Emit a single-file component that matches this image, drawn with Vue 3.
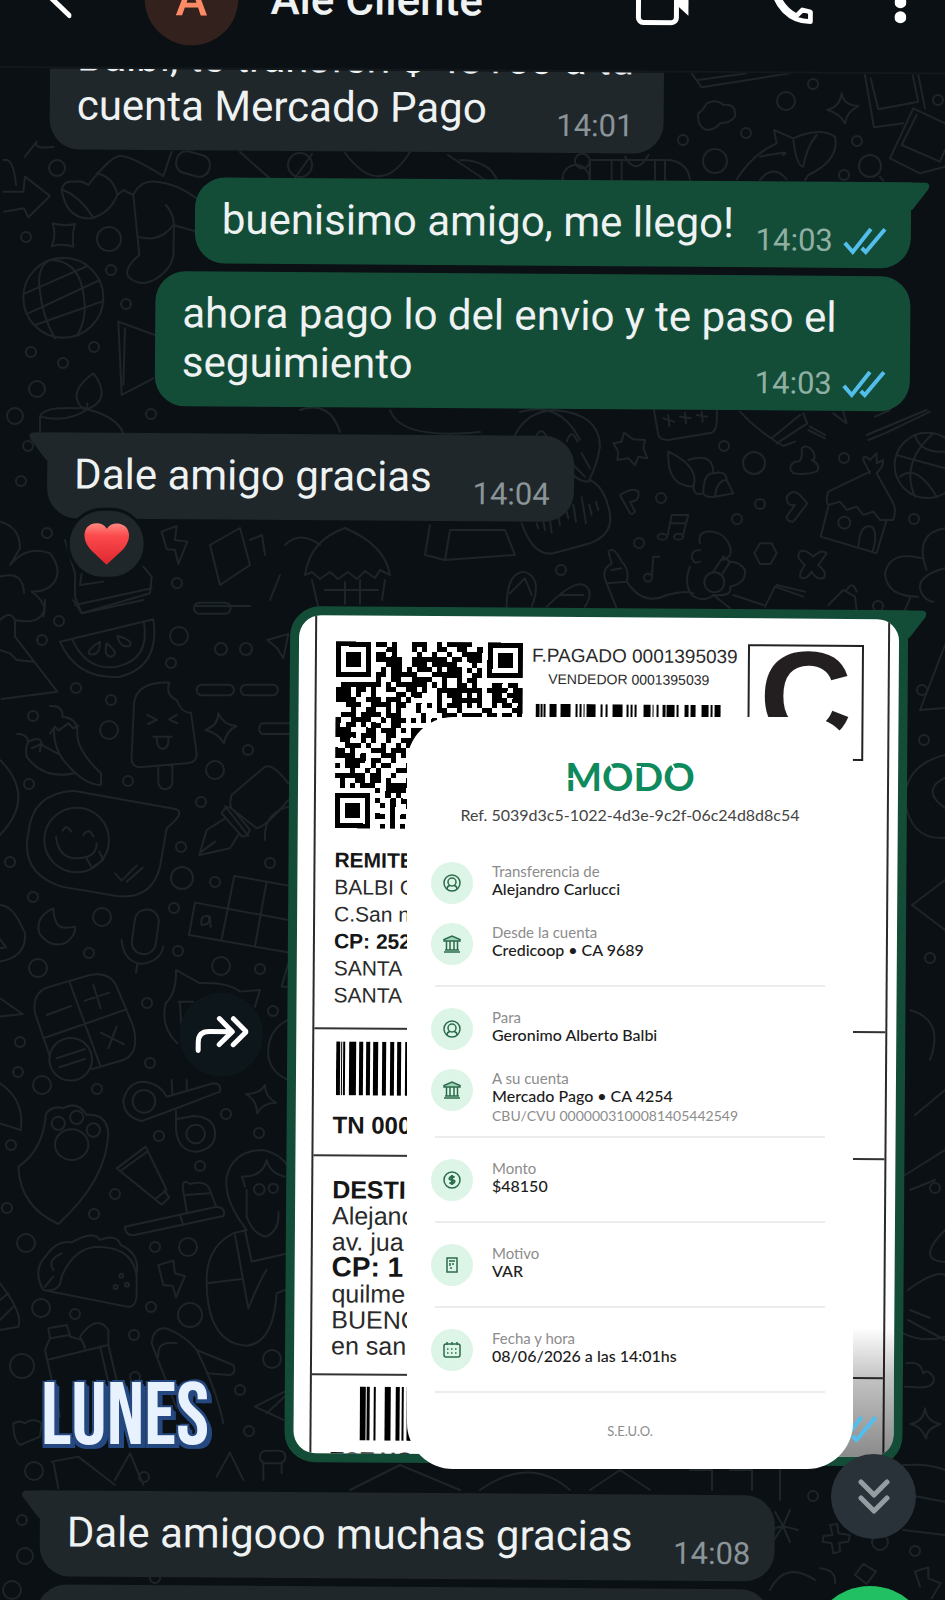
<script setup>
import { ref } from "vue";

const messages = ref([
  { id: 1, side: "in", text: "Balbi, te transferi $ 48150 a tu\ncuenta Mercado Pago", time: "14:01" },
  { id: 2, side: "out", text: "buenisimo amigo, me llego!", time: "14:03", first: true },
  { id: 3, side: "out", text: "ahora pago lo del envio y te paso el seguimiento", time: "14:03" },
  { id: 4, side: "in", text: "Dale amigo gracias", time: "14:04", first: true, reaction: true },
  { id: 5, side: "out", photo: true, first: true },
  { id: 6, side: "in", text: "Dale amigooo muchas gracias", time: "14:08", first: true },
]);

// receipt sections, each one closed by a divider
const sections = [
  [
    { icon: "user", label: "Transferencia de", value: "Alejandro Carlucci" },
    { icon: "bank", label: "Desde la cuenta", value: "Credicoop • CA 9689" },
  ],
  [
    { icon: "user", label: "Para", value: "Geronimo Alberto Balbi" },
    { icon: "bank", label: "A su cuenta", value: "Mercado Pago • CA 4254", extra: "CBU/CVU 0000003100081405442549" },
  ],
  [{ icon: "money", label: "Monto", value: "$48150" }],
  [{ icon: "note", label: "Motivo", value: "VAR" }],
  [{ icon: "date", label: "Fecha y hora", value: "08/06/2026 a las 14:01hs" }],
];

// [x, width] pairs
const barsTop = [[0, 4], [5, 2], [8, 2], [14, 7], [25, 10], [40, 2], [44, 2], [48, 1], [51, 9], [65, 2], [70, 2], [77, 10], [91, 2], [95, 2], [99, 2], [108, 7], [117, 1], [121, 2], [127, 3], [131, 8], [141, 2], [149, 4], [155, 5], [166, 7], [175, 2], [179, 6]];
const barsMid = [[0, 4], [5, 1], [7, 2], [13, 7], [23, 4], [30, 4], [37, 5], [46, 4], [54, 4], [61, 4], [69, 5], [77, 3]];
const barsLow = [[0, 6], [7, 3], [14, 2], [25, 6], [36, 4], [42, 2], [47, 6]];

// QR modules, fixed seed so the code looks the same on every render
const QR = 37;
function inFinder(x, y) {
  return (x < 8 && y < 8) || (x > QR - 9 && y < 8) || (x < 8 && y > QR - 9);
}
function buildQr() {
  let seed = 1395039;
  let d = "";
  for (let y = 0; y < QR; y++) {
    for (let x = 0; x < QR; x++) {
      seed = (seed * 1103515245 + 12345) % 2147483648;
      if (!inFinder(x, y) && seed / 2147483648 > 0.42) d += `M${x} ${y}h1v1h-1z`;
    }
  }
  for (const [x, y] of [[0, 0], [QR - 7, 0], [0, QR - 7]]) {
    d += `M${x} ${y}h7v7h-7zM${x + 1} ${y + 1}v5h5v-5zM${x + 2} ${y + 2}h3v3h-3z`;
  }
  return d;
}
const qrPath = buildQr();

// loose bubbles of the wallpaper: [cx, cy, r]
const dots = [
  [59, 621, 5], [42, 640, 5], [179, 636, 9], [171, 663, 5], [221, 649, 6], [246, 649, 6], [76, 688, 5], [111, 700, 5],
  [33, 716, 5], [109, 730, 9], [248, 750, 5], [215, 770, 9], [29, 784, 5], [128, 781, 5], [201, 802, 5], [181, 847, 5],
  [10, 862, 5], [270, 863, 5], [182, 878, 11], [215, 882, 5], [33, 897, 5], [102, 917, 9], [174, 908, 5], [89, 953, 5],
  [38, 968, 9], [178, 951, 5], [221, 966, 9], [260, 969, 5], [147, 1003, 5], [273, 1011, 5], [20, 1042, 5], [150, 1063, 5],
  [18, 1072, 5], [42, 1085, 9], [97, 1089, 5], [226, 1114, 5], [159, 1136, 5], [259, 1133, 5], [11, 1145, 5], [200, 1166, 5],
  [115, 1194, 5], [7, 1208, 5], [94, 1214, 5], [26, 1243, 9], [155, 1247, 5], [188, 1247, 9], [151, 1307, 5], [41, 1308, 9],
  [75, 1314, 5], [190, 1315, 12], [134, 1335, 5], [22, 1366, 12], [272, 1359, 9], [135, 1377, 5], [240, 1390, 5], [249, 1431, 5],
  [34, 1471, 9], [144, 1477, 5], [57, 168, 8], [26, 237, 5], [109, 239, 12], [111, 270, 5], [126, 304, 5], [31, 352, 5],
  [94, 347, 5], [63, 363, 5], [37, 389, 8], [15, 416, 8], [151, 414, 5], [28, 446, 5], [21, 481, 5], [47, 533, 5], [177, 583, 5],
  [683, 140, 5], [715, 161, 12], [746, 133, 5], [786, 101, 9], [813, 84, 5], [857, 141, 5], [870, 166, 11], [844, 175, 5], [938, 100, 5],
  [724, 446, 5], [754, 463, 11], [844, 458, 5], [661, 498, 5], [737, 519, 5], [760, 504, 5], [639, 543, 5], [561, 570, 5],
  [914, 519, 5], [878, 606, 5], [915, 1551, 5], [813, 1496, 5], [922, 690, 5], [924, 740, 5], [930, 958, 5], [935, 1188, 5],
  [880, 1542, 8], [22, 1520, 5], [25, 1556, 8], [12, 1590, 9], [155, 1578, 5],
];
</script>

<template>
  <main class="story">
    <svg class="wallpaper" viewBox="0 0 945 1600" preserveAspectRatio="xMidYMin slice" aria-hidden="true">
      <circle v-for="(d, i) in dots" :key="i" :cx="d[0]" :cy="d[1]" :r="d[2]" />
      <!-- globe, socks, candle, cloud -->
      <g transform="translate(0 140) scale(.3333)" stroke-width="6">
        <path d="M75 50 110 5Q100 30 160 20M10 155 70 155 75 110 150 168 85 232 72 205 12 215M10 60Q40 50 48 135" />
        <path d="M190 150Q240 170 278 230M185 150Q190 120 225 125 245 120 265 135Q330 50 360 48T490 108L515 35M185 150Q200 240 275 235 330 220 352 165L370 150 400 165M290 100Q340 110 352 165M400 165Q420 120 470 125 530 130 590 175M400 165 418 345Q370 385 385 410 420 445 470 415 510 390 520 350L522 255Q520 220 498 195M412 290Q480 310 520 255L590 275" />
        <path d="M158 250Q190 260 225 252 215 285 220 320 190 310 155 318 170 285 158 250z" />
        <circle cx="190" cy="473" r="120" />
        <path d="M75 460 262 378M85 520 300 420M105 555 305 485M190 355Q110 350 118 440T165 595M150 360Q230 360 248 448T230 588" />
        <path d="M355 545 465 585M355 545 365 765 460 715M375 565 370 735" />
        <path d="M280 700Q225 740 230 775 240 810 262 808 305 790 305 760T280 700zM262 808V790M120 880V830Q130 800 230 805 260 800 262 808 350 830 370 880M120 830Q200 850 262 808" />
        <path d="M0 1145Q60 1160 60 1225 40 1260 30 1275 80 1215 150 1240 190 1290 160 1330 140 1355 95 1355 145 1390 130 1430M0 1310Q70 1290 72 1360" />
        <path d="M485 1175 530 1158 525 1200 562 1205 535 1272 525 1230 500 1228zM195 1200 225 1300 225 1370 245 1420 450 1360 455 1310 430 1280M245 1300 240 1335 310 1325M225 1395 455 1345" />
      </g>
      <!-- watermelon, chilli, ice lolly, sticker, pen, keypad -->
      <g transform="translate(0 600) scale(.3333)" stroke-width="6">
        <path d="M0 60Q30 30 45 60L45 110 172 275 5 297M0 150 30 160 50 180 100 185M45 60Q140 80 135 0M220 0 245 40 430 0" />
        <path d="M180 125 460 58Q480 200 360 230 230 240 180 125zM215 115Q260 215 350 200 450 180 432 68M300 125Q260 150 268 162 300 170 300 125zM320 130Q310 170 335 170 360 160 320 130zM352 108Q360 145 390 138 400 120 352 108z" />
        <rect x="582" y="8" width="110" height="33" rx="16" /><rect x="590" y="254" width="112" height="32" rx="16" />
        <rect x="722" y="254" width="112" height="32" rx="16" /><path d="M870 370H785Q770 386 785 402H870M802 120 865 102 850 175 832 145z" />
        <path d="M655 340Q670 375 710 378 680 390 672 430 655 400 617 390 655 375 655 340z" />
        <path d="M395 470 402 310Q410 245 508 248 495 285 530 300 545 340 573 338L590 460Q592 488 560 490L420 502Q392 500 395 470zM475 502V550Q480 568 497 568 515 565 517 548V498M442 345 470 360 444 372M530 345 507 358 532 370M460 410H515M470 410Q470 448 490 446 508 445 505 410" />
        <path d="M150 318Q190 315 187 350 235 355 232 400 230 450 303 520L303 555Q250 555 190 480 160 440 162 385M150 400 165 380 175 392 205 370 220 385 235 378M52 402Q80 400 85 425 75 440 80 470 130 540 225 520M85 425Q125 405 125 435L180 465M95 445 122 432 120 455" />
        <path d="M0 480Q110 590 0 705M220 572 530 628Q555 640 500 685L480 800Q455 900 350 888L185 860Q60 820 85 700 95 580 220 572z" />
        <circle cx="230" cy="720" r="97" /><path d="M168 710Q175 775 230 775 290 775 290 730M188 692Q200 670 213 695M250 705Q268 680 280 710M260 775 275 803 310 780 298 755M345 820 365 842 410 797M380 845 428 803" />
        <path d="M865 550Q820 490 795 500L695 585Q685 620 700 630L770 685Q800 680 865 600M675 618 745 708M665 640Q680 610 700 630L750 690Q740 715 725 708zM675 655 620 690 598 765 690 745 718 700M605 755 645 725M865 620Q790 640 795 720" />
        <path d="M865 857 703 828 665 1017M585 908 865 960M585 908 567 1005 862 1057M800 845 765 1038M605 975Q600 945 625 948 635 975 605 975M630 950 632 980" />
        <path d="M160 925Q105 950 118 1000 150 1045 195 1030 230 1005 225 980 180 990 170 970T160 925zM0 915Q40 915 75 1000 80 1070 0 1085M0 1045 18 1042 0 1018" />
        <rect x="400" y="928" width="72" height="135" rx="36" transform="rotate(8 436 995)" /><path d="M365 1020Q370 1085 425 1092 480 1085 490 1040M412 1092 408 1118" />
        <path d="M105 1240Q95 1175 150 1160L270 1125Q330 1115 350 1160L400 1280Q420 1360 370 1380L275 1408M105 1240 150 1370M210 1150 300 1395M130 1315 380 1228M140 1245 213 1218M255 1202 328 1178M280 1155 302 1225M303 1298 372 1333M350 1280 325 1345M170 1375 255 1347M178 1402 255 1377" /><circle cx="212" cy="1378" r="64" />
        <path d="M532 1330Q480 1280 497 1210 530 1180 528 1110L600 1150Q680 1145 720 1175L780 1170 765 1220M535 1205 580 1205M540 1210 545 1290M865 1260Q800 1290 805 1370 815 1420 865 1440M0 1195 68 1242 0 1250M865 1090 845 1160H865" />
      </g>
      <!-- paw, fidget, toothbrush, taco, bottle -->
      <g transform="translate(0 1080) scale(.3333)" stroke-width="6">
        <path d="M55 260Q130 210 138 100 160 75 190 85 230 60 260 105 320 100 325 160 320 300 175 432 60 380 55 260z" />
        <circle cx="175" cy="130" r="20" /><circle cx="230" cy="112" r="20" /><circle cx="280" cy="150" r="20" /><ellipse cx="215" cy="194" rx="50" ry="46" />
        <circle cx="432" cy="64" r="34" /><path d="M508 93 425 123Q370 110 370 60 385 5 430 5 480 10 500 50L640 10Q665 10 660 35L508 93M528 93V150Q535 215 590 215 650 205 645 155 640 110 580 108L528 118M515 0 517 40M560 0V30" /><circle cx="587" cy="162" r="28" />
        <path d="M795 15Q795 50 828 68 785 70 772 100 770 60 738 42 780 42 795 15zM0 10Q75 60 62 150L0 130" />
        <path d="M350 265 437 200 500 330 465 358zM365 270 442 215M465 358 485 374 508 352 492 332M375 440 650 380Q680 385 670 408L400 466Q375 465 375 440zM540 405 550 435M560 395 548 320Q550 295 570 312 620 300 630 330L648 378M558 345 628 340" />
        <path d="M130 630Q95 570 140 525 170 480 215 487 280 450 300 480 350 460 362 495 420 520 410 580V650Q405 685 380 680L130 630Q180 640 185 590 220 505 290 500 400 500 410 590M160 570Q140 540 185 520M160 590 135 620" /><circle cx="364" cy="587" r="6" /><circle cx="347" cy="621" r="6" /><circle cx="381" cy="614" r="6" />
        <path d="M475 555 520 542 525 580 555 588 528 652 518 618 490 615zM0 610Q70 700 55 740L0 750M0 660 25 640M0 720 40 680" />
        <path d="M740 450Q670 360 680 290 700 210 790 210 840 220 865 260M735 320Q730 300 725 290 790 290 800 240 810 280 855 290M740 330 740 410Q760 465 800 470 840 450 835 395M740 450 700 460Q620 500 620 600 620 790 740 797 820 790 830 640L855 630M705 465 745 685Q780 600 800 570M735 450 755 545 865 520M620 610 725 597" />
        <circle cx="778" cy="328" r="16" /><circle cx="820" cy="325" r="14" />
        <path d="M145 745 200 735 210 765 150 775zM150 775 135 810 180 1010M210 770 245 780 255 805M140 840 325 795 370 985M255 800 240 770Q290 700 325 750L325 795M300 800 345 990" />
        <path d="M455 790Q460 740 500 745 560 770 590 810L700 855Q710 880 690 885L620 880M455 790Q490 880 530 985M590 810Q650 930 670 1030M475 830Q470 780 530 790M865 930 765 980 850 1020M800 1000 865 940" />
        <path d="M40 1030Q60 1020 75 1030 100 1010 125 1030L120 1070 60 1095Q40 1080 40 1030M155 1145 235 1130 345 1215M160 1145 175 1225M345 1200 390 1120 430 1215M650 1190 690 1118 730 1200" />
        <rect x="780" y="1112" width="76" height="38" rx="18" /><path d="M790 1150V1200M845 1150V1180" />
      </g>
      <!-- top right: tablet, cloud, dolphin, photos -->
      <g transform="translate(560 60) scale(.3333)" stroke-width="6">
        <path d="M395 40 425 82 690 40M415 60 560 40M440 210Q410 200 415 160 430 150 440 130 470 115 490 135 530 130 525 170 510 190 480 190 465 210 440 210z" />
        <path d="M845 100Q850 135 895 138 860 155 855 190 840 160 802 150 840 140 845 100zM915 45 942 202 1030 190M932 55 955 148 1075 125 1058 45M1075 45 1095 145M1060 145 1155 190M1060 145 990 295 1080 340 1155 320M1070 165 1025 255 1140 305 1155 270M530 358Q580 280 650 250L642 210 700 235Q780 200 825 230 840 300 745 345L735 360M600 290Q700 270 670 285M600 360Q640 310 680 358M700 240Q710 320 730 320 740 260 770 225M960 350 970 362" />
        <path d="M90 360V300H330Q385 310 390 360M155 300V360M185 300V360M285 300V360M315 300V360M195 290Q230 350 265 285" /><circle cx="67" cy="303" r="22" /><circle cx="48" cy="355" r="40" />
      </g>
      <!-- between the bubbles -->
      <path d="M240 152 285 192 312 154M345 153Q380 200 410 152M448 155 500 190Q495 160 460 160M300 410Q330 400 340 432M390 410Q400 440 480 432M520 412Q560 400 580 440" />
      <circle cx="300" cy="165" r="12" /><rect x="176" y="153" width="34" height="22" rx="10" transform="rotate(15 193 164)" />
      <path d="M285 545Q300 530 320 545M305 575Q310 540 345 528 385 545 390 575L380 570 375 578 365 571 357 579 348 572 338 579 330 572 320 579 312 572zM312 580 318 606M385 580 382 600M325 590H378M345 582V604M360 580V604M210 545 240 528 250 565 220 585zM250 540 262 535 265 555M430 525 425 555 445 560 450 530H505L515 555 445 560M280 575 270 600M195 606H250" />
      <!-- sticker, shell, hut, ball, flower -->
      <g transform="translate(500 410) scale(.3333)" stroke-width="6">
        <path d="M45 75Q80 5 160 0 300 10 300 110 290 170 265 215 240 215 220 195M110 75Q125 50 140 80M200 95Q215 50 232 95M245 130 270 175M220 165 255 200M65 340Q100 440 160 430L270 400Q350 370 325 290 310 230 270 210M110 340 115 355M130 335 135 360M150 330 155 368M175 320 180 345M200 305 205 325M220 285 228 335M245 262 258 340M268 285 275 315M288 275 295 300" />
        <path d="M340 100 365 95 372 68 400 88 435 90 430 115 442 145 415 140 405 165 385 145 352 150 355 125zM462 0 475 75Q480 90 505 90L635 68Q655 60 650 0M490 25 522 35M505 15 508 48M540 20 572 25M555 8 558 40M590 15 622 20M605 5 608 35" />
        <path d="M720 5Q770 60 850 108L885 95M815 85 900 15M830 100 922 40 910 10M925 60 975 85M930 50 975 75M1100 75 1280 0M1105 90 1155 70 1290 5M1125 20 1170 0M1000 10 1040 40 1030 5" />
        <path d="M505 125Q500 230 580 230 600 170 505 125zM565 150Q640 125 640 190 610 190 610 250 580 260 580 225M640 190Q680 180 680 210 650 210 645 260 620 265 610 250M680 210 700 250 645 260M905 115Q920 100 940 125 950 150 935 150 965 165 950 185 920 195 880 190 860 170 885 155 910 160 905 115z" />
        <path d="M360 255Q400 230 415 245 420 275 390 275L405 305Q400 315 390 310zM860 260Q880 235 900 255L922 280 880 335Q860 335 860 320L885 285Q860 290 860 260z" />
        <path d="M515 315H565L548 380M515 315 503 375M510 340H558" /><ellipse cx="487" cy="380" rx="14" ry="9" /><ellipse cx="536" cy="380" rx="14" ry="9" /><path d="M460 440H478M460 440 456 495" /><circle cx="444" cy="503" r="12" />
        <path d="M600 420Q575 420 575 440 580 465 600 455M600 400Q590 360 640 365 680 375 690 410 700 440 670 450M570 470Q550 520 575 555 610 580 640 555 700 560 690 530 740 520 735 480 720 455 690 455M640 485 670 440 690 455 665 495" /><circle cx="643" cy="517" r="30" />
        <path d="M320 520Q300 480 335 460L325 425Q340 405 365 455 390 480 380 515zM335 480 365 475M320 520 350 595M380 515Q430 590 500 555 560 540 580 550M640 555 690 595M700 555 790 585M795 590 825 530 910 560M830 525 915 545" />
        <path d="M780 400H815L830 430 812 462H780L763 430zM900 425Q915 415 940 440 965 415 980 430L955 465Q985 490 970 505 950 510 935 485 915 515 900 500 900 485 915 465 885 440 900 425z" />
        <path d="M1110 190 1090 150Q1090 130 1110 150L1130 130 1130 160 1150 150Q1150 170 1130 190M1110 185 985 245Q975 275 985 285L1020 275 1040 300 1070 290 1090 315 1120 305 1140 330 1180 330Q1190 300 1180 280L1130 190M985 290 962 380 1130 430 1160 330M1075 410Q1080 340 1115 350 1135 365 1118 425" /><circle cx="1033" cy="338" r="18" />
        <circle cx="1282" cy="166" r="98" /><path d="M1190 135 1335 175M1245 75Q1260 130 1335 125M1300 70Q1200 160 1245 260M1200 200Q1250 160 1310 260" />
        <path d="M1280 480Q1240 370 1335 355M1255 560Q1160 560 1155 490 1170 420 1265 445M1335 475Q1240 500 1265 550 1280 575 1300 575M1215 600 1230 565M985 585 1030 540 1065 560 1070 600M1040 540Q1060 510 1070 545M20 590Q20 490 70 485 130 500 95 590M30 550 75 505 95 555M140 590Q230 500 260 530 280 550 255 590M180 555H250" />
      </g>
      <!-- right edge -->
      <path d="M945 645 920 710 945 708M945 755Q905 765 905 800 910 840 945 838M945 778Q920 790 945 808M945 1150 905 1175M910 1190 935 1180M945 1230Q915 1260 945 1262M908 1290Q935 1270 945 1275M908 1320 945 1340M910 1310 930 1318M945 880 912 905 945 930M910 1010Q945 1020 930 1060M945 1090 915 1115" />
      <g transform="translate(820 1320) scale(.3333)" stroke-width="6">
        <path d="M250 40Q310 70 375 50M255 200 290 202Q350 205 340 170 320 145 310 160 300 120 260 130M315 265Q320 305 362 312 320 325 318 355 305 320 272 312 310 305 315 265zM250 435Q330 430 375 450M240 520 375 545M250 630 375 645M30 615 52 612 55 640 90 645 85 665 58 668 60 695 40 700 35 670 8 665 10 648 38 645zM130 732 168 755 140 792 105 765zM285 755 325 742 325 775 362 790 335 835M285 755 300 800M0 745Q50 750 45 790" />
      </g>
      <path d="M350 1490 400 1465 460 1490M480 1490Q530 1455 570 1490M590 1490 620 1470 650 1490M690 1470H712V1490M730 1470H752V1490M780 1470V1500M775 1512 783 1526M790 1510 783 1526 798 1530M783 1526 768 1530M783 1526 790 1542M783 1526 774 1540M770 1590Q785 1560 815 1580" />
    </svg>

    <section class="screen">
      <header class="bar">
        <button class="icon-btn back" type="button" aria-label="Volver">
          <svg viewBox="0 0 24 44"><path d="M20 3 3 22 22 40" /></svg>
        </button>
        <span class="avatar">A</span>
        <h1 class="name">Ale Cliente</h1>
        <button class="icon-btn video" type="button" aria-label="Videollamada">
          <svg viewBox="0 0 56 48"><rect x="3" y="3" width="38" height="42" rx="5" /><path class="fill" d="M42 19 53 8V38L42 28z" /></svg>
        </button>
        <button class="icon-btn call" type="button" aria-label="Llamar">
          <svg viewBox="0 0 24 24"><path d="M19.5 15.6 16.4 14.9 13.9 17.4C10.6 15.7 8.3 13.4 6.6 10.1L9.1 7.6 8.4 4.2H4.2C4.2 12.9 11.1 19.8 19.8 19.8V15.8Z" /></svg>
        </button>
        <button class="icon-btn more" type="button" aria-label="Más opciones">
          <svg viewBox="0 0 12 48"><g class="fill"><circle cx="6" cy="8" r="6" /><circle cx="6" cy="23" r="6" /><circle cx="6" cy="38" r="6" /></g></svg>
        </button>
      </header>

      <div class="thread">
        <article v-for="m in messages" :key="m.id" class="msg" :class="[m.side, { first: m.first, photo: m.photo }]">
          <svg v-if="m.first" class="tail" viewBox="0 0 20 28" aria-hidden="true"><path d="M0 0H15Q21 1 18 7L2 28H0z" /></svg>
          <template v-if="!m.photo">
            <p class="text">{{ m.text }}<i class="spacer"></i></p>
            <span class="meta">
              {{ m.time }}
              <svg v-if="m.side === 'out'" class="checks" viewBox="0 0 44 28" aria-label="Leído"><path d="M2 16 10 25 28 2M19 21 23 25 42 2" /></svg>
            </span>
            <span v-if="m.reaction" class="reaction" role="img" aria-label="Me encanta">
              <svg viewBox="0 0 46 42">
                <defs><linearGradient id="heart" x1="0" y1="0" x2="0" y2="1"><stop offset="0" stop-color="#ff8a80" /><stop offset=".3" stop-color="#fb4a4d" /><stop offset="1" stop-color="#e0262f" /></linearGradient></defs>
                <path fill="url(#heart)" d="M23 6C19-1 8-1 3 5-2 13 2 22 8 28L23 42 38 28C44 22 48 13 43 5 38-1 27-1 23 6z" />
              </svg>
            </span>
          </template>

          <template v-else>
            <button class="forward" type="button" aria-label="Reenviar">
              <svg viewBox="0 0 54 40"><path d="M4 36V28Q4 17 15 17H38M25 4 38 17 25 30M39 4 52 17 39 30" /></svg>
            </button>
            <figure class="shot">
              <div class="label">
                <div class="block">
                  <div class="head">
                    <svg class="qr" :viewBox="`0 0 ${QR} ${QR}`" shape-rendering="crispEdges"><path :d="qrPath" fill-rule="evenodd" /></svg>
                    <div class="codes">
                      <div class="paid">F.PAGADO 0001395039</div>
                      <div class="seller">VENDEDOR 0001395039</div>
                      <svg class="bars" width="188" height="40"><rect v-for="b in barsTop" :key="b[0]" :x="b[0]" :width="b[1]" height="40" /></svg>
                    </div>
                    <div class="zone">C</div>
                  </div>
                  <div class="from"><b>REMITE</b><br />BALBI C<br />C.San n<br /><b>CP: 252</b><br />SANTA<br />SANTA</div>
                </div>
                <div class="block track">
                  <svg class="bars" width="80" height="54"><rect v-for="b in barsMid" :key="b[0]" :x="b[0]" :width="b[1]" height="54" /></svg>
                  <b class="tn">TN 000</b>
                </div>
                <div class="block to"><b>DESTI</b><br />Alejanc<br />av. jua<br /><b class="zip">CP: 1</b><br />quilme<br />BUENO<br />en san</div>
                <div class="block last">
                  <svg class="bars" width="54" height="54"><rect v-for="b in barsLow" :key="b[0]" :x="b[0]" :width="b[1]" height="54" /></svg>
                  <b class="tot">TOT UG</b>
                </div>
              </div>
              <svg class="checks" viewBox="0 0 44 28" aria-label="Leído"><path d="M2 16 10 25 28 2M19 21 23 25 42 2" /></svg>
            </figure>
          </template>
        </article>
        <div class="msg in stub"></div>
      </div>
    </section>

    <section class="receipt">
      <svg class="modo" viewBox="0 0 130 32" role="img" aria-label="MODO">
        <text x="65" y="30" text-anchor="middle">MODO</text>
        <path d="M2 18H9M43 0 48 9M70 6H76M105 0 110 9" />
      </svg>
      <p class="refno">Ref. 5039d3c5-1022-4d3e-9c2f-06c24d8d8c54</p>
      <div v-for="(rows, i) in sections" :key="i" class="group" :class="{ tight: i === 1 }">
        <div v-for="r in rows" :key="r.label" class="row">
          <span class="dot">
            <svg v-if="r.icon === 'user'" viewBox="0 0 20 20"><circle cx="10" cy="10" r="8" /><circle cx="10" cy="9" r="4" /><path d="M5 16Q5 13 8 12.500M15 16Q15 13 12 12.500" /></svg>
            <svg v-else-if="r.icon === 'bank'" class="tint" viewBox="0 0 20 20"><path d="M2 7V5.500L10 2 18 5.500V7zM2 18H18M3 16H17M4.500 7V16M8 7V16M12 7V16M15.500 7V16" /></svg>
            <svg v-else-if="r.icon === 'money'" viewBox="0 0 20 20"><circle cx="10" cy="10" r="8" /><path stroke-width="2" d="M12.500 7.500Q10 5.500 8 7.500T10 10 12 12.500 7.500 12.500M10 5V15" /></svg>
            <svg v-else-if="r.icon === 'note'" viewBox="0 0 20 20"><rect x="5" y="3" width="10" height="14" /><path d="M7 6H13M8 8V11M10 9H12M8 13H10" /></svg>
            <svg v-else viewBox="0 0 20 20"><rect x="2" y="4" width="16" height="13" rx="2" /><path d="M5 2V5M10 2V5M15 2V5" /><path stroke-dasharray="1.500 2.500" d="M5 9H16M5 13H16" /></svg>
          </span>
          <div class="info">
            <span class="key">{{ r.label }}</span>
            <span class="val">{{ r.value }}</span>
            <span v-if="r.extra" class="extra">{{ r.extra }}</span>
          </div>
        </div>
      </div>
      <p class="seuo">S.E.U.O.</p>
    </section>

    <div class="day">LUNES</div>

    <button class="fab down" type="button" aria-label="Ir al final">
      <svg viewBox="0 0 32 36"><path d="M3 3 16 16 29 3M3 19 16 32 29 19" /></svg>
    </button>
    <button class="fab mic" type="button" aria-label="Mensaje de voz"></button>
  </main>
</template>

<style>
body { margin: 0; background: #0b1014; }
</style>

<style scoped>
.story {
  position: relative;
  height: 100vh;
  overflow: hidden;
  background: #0b1014;
  font-family: Roboto, "Liberation Sans", sans-serif;
  color: #eef2f3;
}
.story * { box-sizing: border-box; }
p, h1, figure { margin: 0; }
button { padding: 0; border: 0; background: none; }

.wallpaper {
  position: absolute; inset: 0;
  width: 100%; height: 100%;
  fill: none; stroke: #1e2529; stroke-width: 2;
  stroke-linecap: round; stroke-linejoin: round;
}

/* the phone screen sits slightly tilted in the story */
.screen { position: relative; transform: rotate(0.4deg); transform-origin: 0 0; }

.bar {
  position: relative; z-index: 1;
  display: flex; align-items: center;
  height: 140px; margin: -72px -20px 0 0; padding: 0 58px 0 48px;
  background: #0b1014;
  border-bottom: 2px solid #12181c;
}
.icon-btn { display: flex; flex: none; }
.icon-btn svg { fill: none; stroke: #fff; stroke-width: 5; stroke-linecap: round; stroke-linejoin: round; }
.icon-btn .fill { fill: #fff; stroke: none; }
.back svg { width: 24px; height: 44px; }
.avatar {
  display: grid; place-items: center;
  width: 94px; height: 94px; margin-left: 73px; flex: none;
  border-radius: 50%;
  background: #33211d; color: #ff8a66;
  font-size: 48px; font-weight: 500;
}
.name { margin-left: 32px; flex: 1; font-size: 44px; font-weight: 500; line-height: 48px; }
.video svg { width: 56px; height: 48px; }
.call { margin-left: 72px; }
.call svg { width: 57px; height: 57px; stroke-width: 2; }
.more { margin-left: 74px; }
.more svg { width: 12px; height: 48px; }

.thread {
  display: flex; flex-direction: column; align-items: flex-start;
  margin-top: -54px; padding: 0 32px 0 51px;
}
.msg {
  position: relative;
  max-width: calc(100% - 107px);
  margin-top: 8px; padding: 17px 24px 20px 27px;
  border-radius: 30px;
  background: #1f272a;
}
.msg:first-child { margin-top: 0; padding-right: 30px; }
.msg.out { align-self: flex-end; background: #144d37; }
.msg.first { margin-top: 27px; }
.msg.in.first { border-top-left-radius: 0; }
.msg.out.first { border-top-right-radius: 0; }
.tail { position: absolute; top: 0; left: 100%; width: 20px; height: 28px; margin-left: -1px; fill: #144d37; }
.in .tail { left: auto; right: 100%; margin: 0 -1px 0 0; transform: scaleX(-1); fill: #1f272a; }
.text { font-size: 42px; line-height: 49px; white-space: pre-line; }
.spacer { display: inline-block; width: 118px; }
.out .spacer { width: 153px; }
.meta {
  position: absolute; right: 24px; bottom: 9px;
  display: flex; align-items: center; gap: 10px;
  font-size: 31px; line-height: 36px; color: #8b9498;
}
.msg:first-child .meta { right: 30px; }
.out .meta { color: #8fb0a3; }
.checks { width: 44px; height: 28px; fill: none; stroke: #53bdeb; stroke-width: 4; }
.reaction {
  position: absolute; left: 20px; top: 75px;
  display: grid; place-items: center;
  width: 80px; height: 72px;
  border: 3px solid #0b1014; border-radius: 36px;
  background: #1f272a;
}
.reaction svg { width: 46px; height: 42px; }

.msg.photo { margin-top: 86px; padding: 9px; }
.msg.photo + .msg { margin-top: 30px; }
.forward {
  position: absolute; right: 100%; top: 387px;
  display: grid; place-items: center;
  width: 84px; height: 84px; margin-right: 24px;
  border-radius: 50%;
  background: #0d161a;
}
.forward svg { width: 54px; height: 40px; fill: none; stroke: #fff; stroke-width: 5; stroke-linecap: round; stroke-linejoin: round; }
.shot {
  position: relative;
  width: 600px; height: 838px; overflow: hidden;
  padding: 0 9px 0 16px;
  border-radius: 22px;
  background: #fff;
}
.shot::after {
  content: "";
  position: absolute; right: 0; bottom: 0;
  width: 160px; height: 130px;
  background: linear-gradient(rgba(0,0,0,0), rgba(0,0,0,0.24) 40%, rgba(0,0,0,0.46));
}
.shot .checks { position: absolute; z-index: 1; right: 16px; bottom: 14px; }

.label { border: solid #2b2b2b; border-width: 0 2px; color: #2a2a2a; font-family: "Liberation Sans", Arial, sans-serif; }
.label b { color: #161616; }
.block { padding-left: 19px; border-bottom: 2px solid #333; }
.block:last-child { border-bottom: 0; }
.head { display: flex; align-items: flex-start; padding-top: 26px; }
.qr { width: 187px; height: 187px; margin-right: 9px; flex: none; }
.bars { display: block; }
.codes { width: 206px; text-align: center; white-space: nowrap; }
.paid { font-size: 19px; line-height: 26px; }
.seller { padding-right: 12px; font-size: 14px; line-height: 20px; }
.codes .bars { margin: 15px 0 0 4px; }
.zone {
  width: 116px; height: 116px; margin-left: 10px;
  border: 2px solid #222;
  font-size: 128px; line-height: 100px; font-weight: 700; text-align: center;
  color: #231f20;
}
.from { padding: 18px 0 19px; font-size: 21px; line-height: 27px; }
.track { padding-top: 12px; padding-bottom: 16px; }
.track .bars { margin-left: 3px; }
.tn { display: block; margin-top: 16px; font-size: 24px; line-height: 27px; }
.to { padding-top: 20px; padding-bottom: 15px; font-size: 25px; line-height: 26px; }
.zip { font-size: 28px; line-height: 26px; }
.last { padding-top: 11px; }
.last .bars { margin-left: 29px; }
.tot { display: block; margin-top: 7px; font-size: 22px; line-height: 26px; }

.stub { width: 734px; height: 86px; margin-left: -3px; }

/* stickers placed over the chat */
.receipt {
  position: absolute; left: 407px; top: 717px;
  width: 446px;
  padding: 44px 28px 26px;
  border-radius: 46px;
  background: #fff;
  font-family: Lato, "Open Sans", sans-serif;
  color: #222;
}
.modo { display: block; width: 130px; height: 32px; margin: 0 auto; overflow: visible; }
.modo text { font: 700 39px Lato, sans-serif; fill: #0e8a5c; }
.modo path { fill: none; stroke: #fff; stroke-width: 2; }
.refno { margin: 10px 0 14px; text-align: center; font-size: 16px; line-height: 24px; color: #444; white-space: nowrap; }
.group {
  display: flex; flex-direction: column; gap: 19px;
  padding: 21px 0 20px;
  border-bottom: 2px solid #ececec;
}
.group.tight { padding-bottom: 9px; }
.row { display: flex; align-items: flex-start; }
.dot { display: grid; place-items: center; width: 42px; height: 42px; margin: 0 19px 0 -4px; flex: none; border-radius: 50%; background: #dcf5e6; }
.dot svg { width: 20px; height: 20px; fill: none; stroke: #2c6b4c; stroke-width: 1.5; }
.dot .tint { fill: #9fd4b6; }
.info { display: flex; flex-direction: column; white-space: nowrap; }
.key { font-size: 15px; line-height: 18px; color: #8c8c8c; }
.val { font-size: 16px; line-height: 18px; font-weight: 500; color: #1c1c1c; }
.extra { font-size: 14px; line-height: 22px; color: #8c8c8c; }
.seuo { margin-top: 26px; text-align: center; font-size: 13px; line-height: 24px; color: #8c8c8c; }

.day {
  position: absolute; left: 41px; top: 1374px;
  font-family: "Bebas Neue", "Roboto Condensed", "Liberation Sans Narrow", Roboto, sans-serif;
  font-size: 88px; line-height: 88px;
  color: #e8f2ff;
  text-shadow: 3px 2px 0 #24487f, 5px 4px 0 #24487f, -2px -1px 0 #24487f, 2px -2px 0 #24487f, -2px 4px 0 #24487f;
}

.fab { position: absolute; display: grid; place-items: center; border-radius: 50%; }
.down { right: 29px; top: 1454px; width: 85px; height: 85px; background: #2a3239; }
.down svg { width: 32px; height: 36px; fill: none; stroke: #949da2; stroke-width: 5; stroke-linecap: round; stroke-linejoin: round; }
.mic { right: 15px; top: 1586px; width: 120px; height: 120px; background: #21c063; }
</style>
